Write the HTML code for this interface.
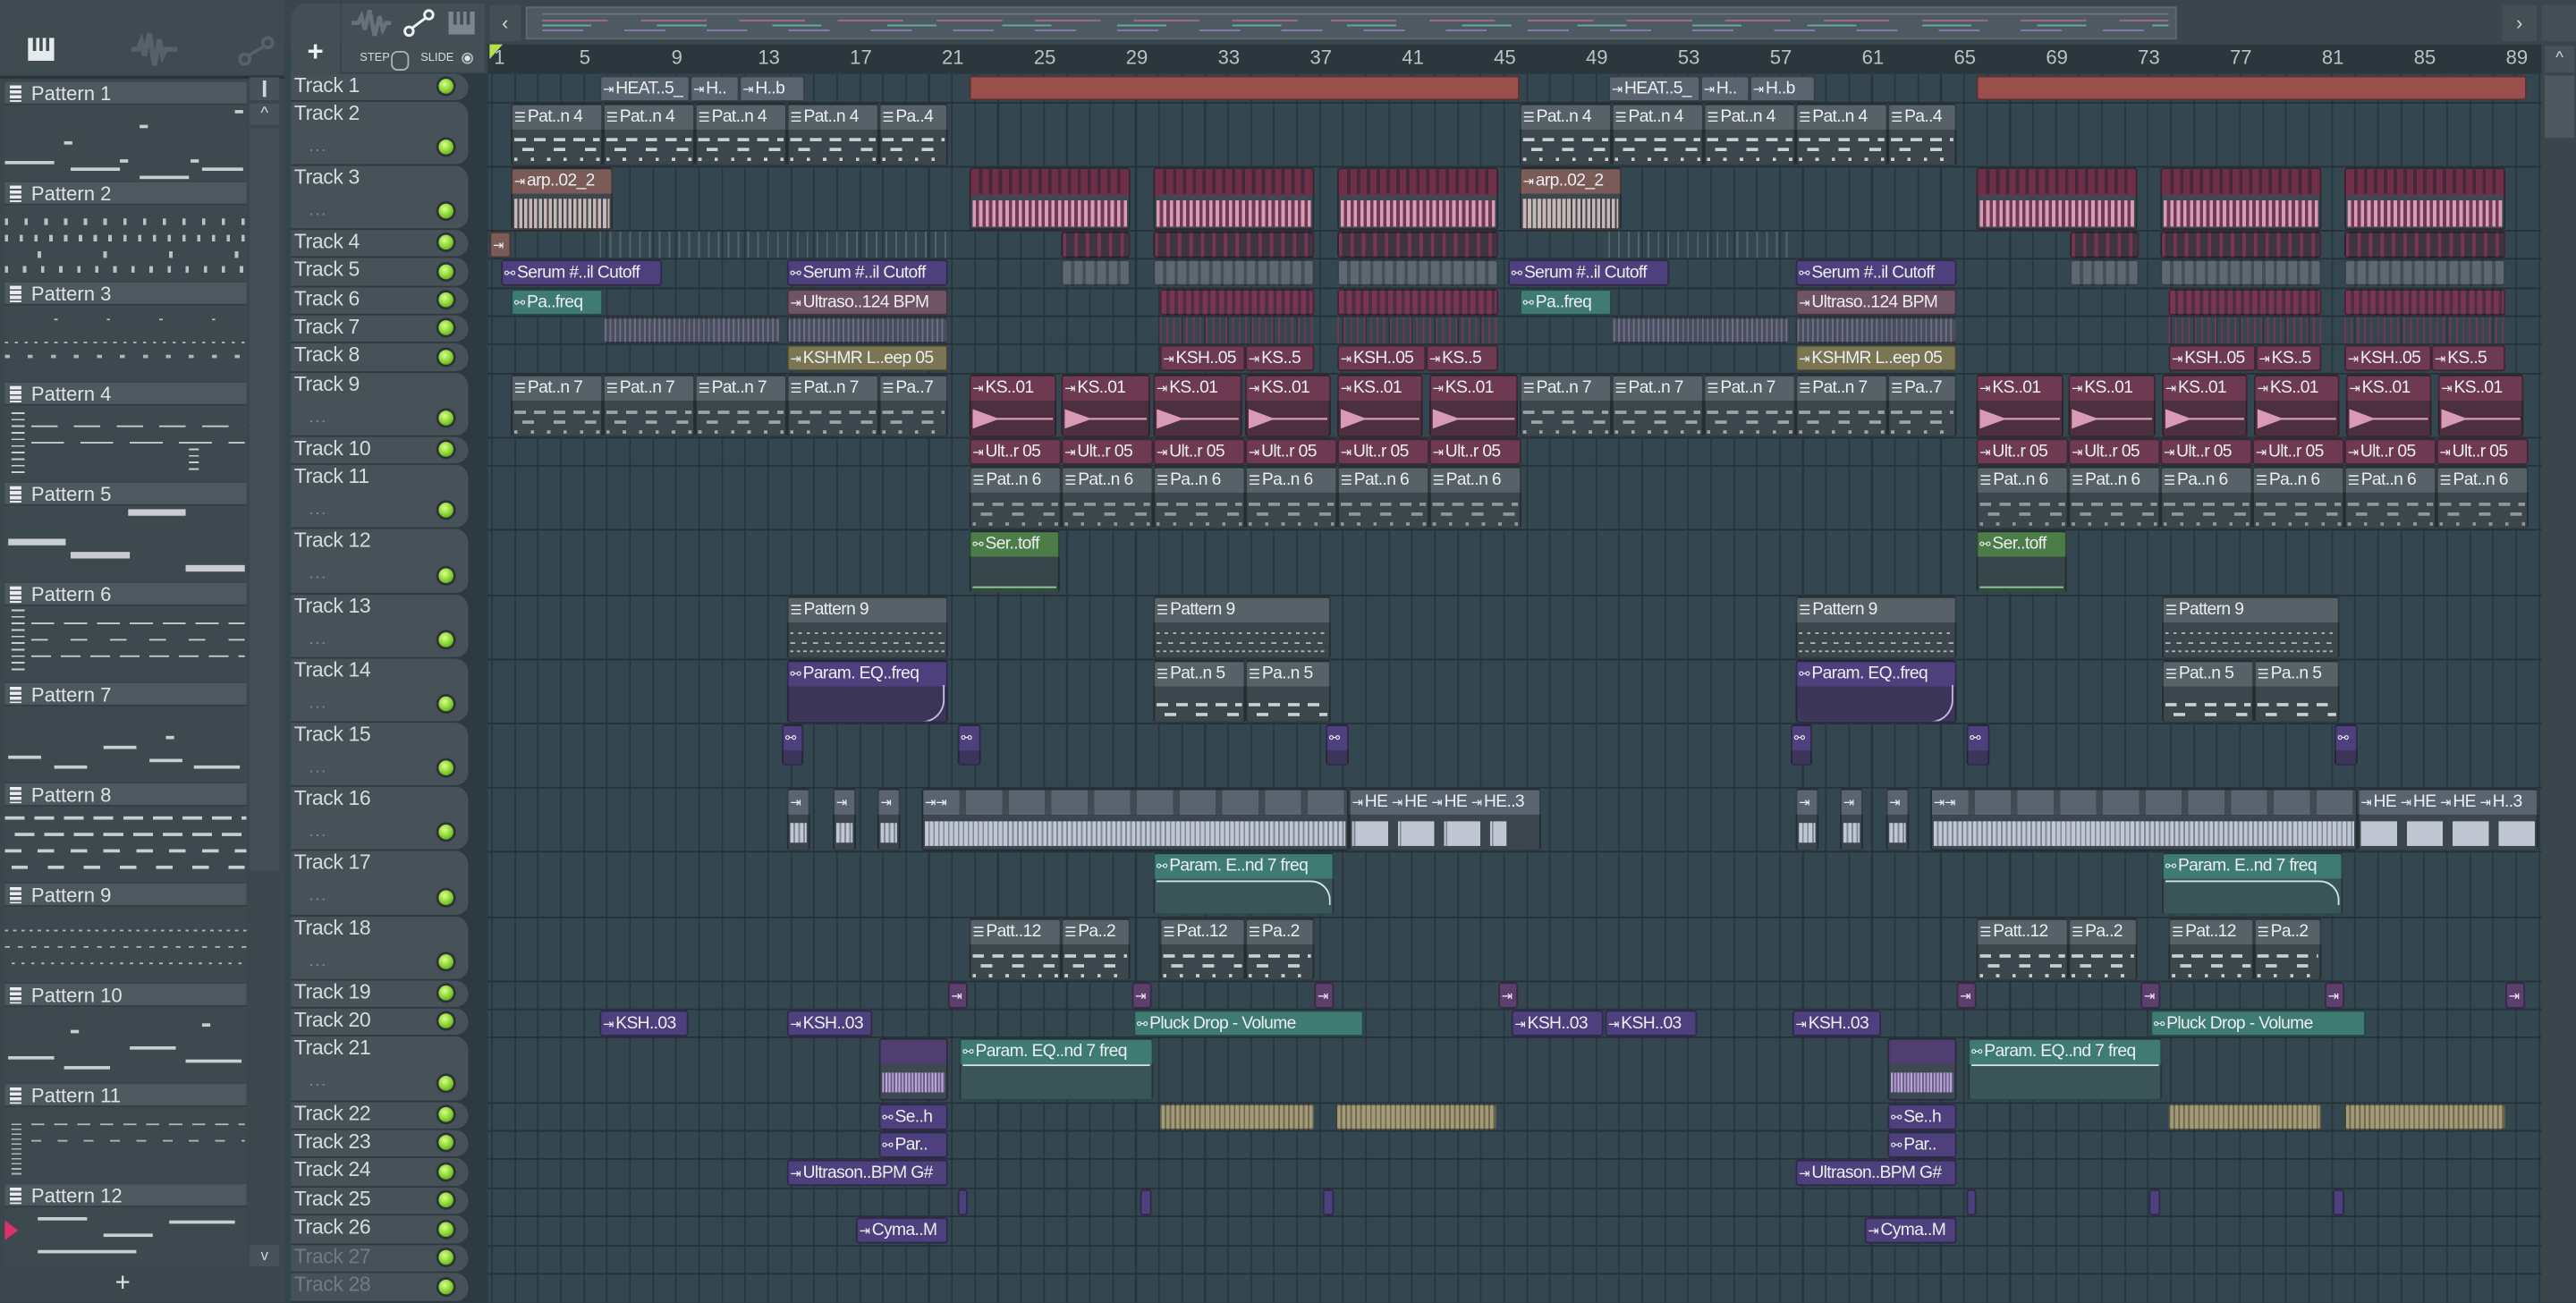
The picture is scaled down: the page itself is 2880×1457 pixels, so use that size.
<!DOCTYPE html>
<html><head><meta charset="utf-8">
<style>
body{margin:0;background:#2f3b42;width:2880px;height:1456px;overflow:hidden}
#w{position:absolute;left:0;top:0;width:1568px;height:793px;transform:scale(1.836735);transform-origin:0 0;font-family:"Liberation Sans Narrow","Liberation Sans","DejaVu Sans Condensed",sans-serif;overflow:hidden;background:#34454e}
.abs{position:absolute}
#left{position:absolute;left:0;top:0;width:173px;height:793px;background:#3b464d}
#ltop{position:absolute;left:0;top:0;width:173px;height:46px;background:#3f4a51;border-bottom:2px solid #2a353b}
.ph{position:absolute;left:3px;width:147px;height:14px;background:#4d585f;color:#dde3e6;font-size:12px;line-height:14px;padding-left:16px;box-sizing:border-box;border-bottom:1px solid #333e44}
.ph:before{content:"";position:absolute;left:3px;top:2px;width:7px;height:10px;background:repeating-linear-gradient(#e8ecee 0 2px,#4d585f 2px 3px)}
.pv{position:absolute;left:3px;width:147px;height:46px;background:#3e494f}
.n{position:absolute;height:2px;background:#c7cdd1}
#ptop{position:absolute;left:173px;top:0;width:1395px;height:27px;background:#3a454c}
#ruler{position:absolute;left:297px;top:27px;width:1250px;height:18px;background:#2b363d;color:#b9c3c8;font-size:12px}
#ruler span{position:absolute;top:1px;transform:translateX(-50%)}
#hdrs{position:absolute;left:177px;top:45px;width:120px;height:748px;background:#2e3a41}
.th{position:absolute;left:0;width:108px;box-sizing:border-box;background:#475158;border-radius:0 8px 8px 0;border-bottom:1px solid #2e3a41;color:#d5dcdf;font-size:12.5px;letter-spacing:-0.2px;line-height:15px;padding:0 0 0 2px}
.led{position:absolute;left:90px;width:9px;height:9px;border-radius:50%;background:radial-gradient(circle at 40% 35%,#d8ff8a,#86cf2c 55%,#4f8a17);box-shadow:0 0 0 1.5px #2a3338}
.dots{position:absolute;left:11px;color:#7f8b92;font-size:10px;letter-spacing:1px}
#grid{position:absolute;left:297px;top:45px;width:1250px;height:748px;background-color:#34464f;background-image:repeating-linear-gradient(90deg,#27363e 0 1px,transparent 1px 14px);background-position:2px 0}
.rl{position:absolute;left:297px;width:1250px;height:1px;background:#25323a}
.c{position:absolute;box-sizing:border-box;border:1px solid rgba(10,15,20,.45);border-radius:2px;overflow:hidden;font-size:10.5px;letter-spacing:-0.35px;color:#eceef2;line-height:14px;white-space:nowrap;padding-left:1px}
.i{font-size:8px;margin-right:1px;font-family:"DejaVu Sans",sans-serif;letter-spacing:0}
.p{background:linear-gradient(#566168 0 15px,#3b464d 15px)}
.a{background:linear-gradient(#6e3a52 0 15px,#4d3040 15px)}
.m{background:linear-gradient(#4e407c 0 15px,#3b3658 15px)}
.t{background:linear-gradient(#3f7a73 0 15px,#3b5458 15px)}
.g{background:linear-gradient(#4c7c47 0 15px,#37464a 15px)}
.o{background:#7a7553}
.b{background:linear-gradient(#7a5b58 0 15px,#3d464c 15px)}
.u{background:#6f5466}
.s{background:linear-gradient(#5a6470 0 15px,#3b464e 15px)}
.red{background:#9a4f4d}
.wv{position:absolute;left:1px;right:1px}
.pn{background:repeating-linear-gradient(90deg,#c9cfd3 0 7px,transparent 7px 12px) 0 3px/100% 2px no-repeat,repeating-linear-gradient(90deg,transparent 0 5px,#c9cfd3 5px 12px,transparent 12px 19px) 0 9px/100% 2px no-repeat,repeating-linear-gradient(90deg,#c9cfd3 0 2px,transparent 2px 10px) 0 15px/100% 2px no-repeat}
.pk{background:repeating-linear-gradient(90deg,#d89ab5 0 2px,#6e3a52 2px 4px)}
.sl{background:repeating-linear-gradient(90deg,#6e2f48 0 4px,#46283a 4px 6px)}
.gs{background:repeating-linear-gradient(90deg,#5e6872 0 5px,#454f59 5px 7px)}
.wg{background:repeating-linear-gradient(90deg,#c1c6d3 0 2px,#7f8898 2px 3px)}
.ol{background:repeating-linear-gradient(90deg,#a39a78 0 2px,#6e6850 2px 3px)}
</style></head><body><div id="w">

<!-- LEFT PANEL -->
<div id="left">
<div id="ltop">
 <svg class="abs" style="left:17px;top:23px" width="16" height="14" viewBox="0 0 16 14"><rect x="0" y="0" width="16" height="14" fill="#e6eaec"/><rect x="3" y="0" width="2" height="8" fill="#3f4a51"/><rect x="7" y="0" width="2" height="8" fill="#3f4a51"/><rect x="11" y="0" width="2" height="8" fill="#3f4a51"/></svg>
 <svg class="abs" style="left:80px;top:20px" width="28" height="20" viewBox="0 0 28 20"><path d="M0 10h4l2-5 2 9 3-14 3 20 3-16 2 10 2-4h7" stroke="#56626a" stroke-width="3" fill="none"/></svg>
 <svg class="abs" style="left:145px;top:22px" width="22" height="18" viewBox="0 0 22 18"><circle cx="4" cy="14" r="3" stroke="#56626a" stroke-width="2" fill="none"/><circle cx="18" cy="4" r="3" stroke="#56626a" stroke-width="2" fill="none"/><path d="M6 12L16 6" stroke="#56626a" stroke-width="2"/></svg>
</div>
<div class="abs" style="left:152px;top:47px;width:18px;height:14px;background:#47525a"><div class="abs" style="left:8px;top:2px;width:2px;height:10px;background:#cfd5d8"></div></div>
<div class="abs" style="left:152px;top:63px;width:18px;height:13px;background:#47525a;color:#cfd5d8;font-size:10px;text-align:center;line-height:13px">^</div>
<div class="abs" style="left:152px;top:78px;width:18px;height:452px;background:#434e55"></div>
<div class="abs" style="left:152px;top:758px;width:18px;height:13px;background:#47525a;color:#cfd5d8;font-size:9px;text-align:center;line-height:13px">v</div>
<div class="abs" style="left:70px;top:773px;color:#dfe4e6;font-size:16px">+</div>

<div class="ph" style="top:50px">Pattern 1</div><div class="pv" style="top:64px"><div class="n" style="left:0;top:34px;width:30px"></div><div class="n" style="left:40px;top:38px;width:30px"></div><div class="n" style="left:82px;top:43px;width:30px"></div><div class="n" style="left:120px;top:38px;width:25px"></div><div class="n" style="left:36px;top:22px;width:5px"></div><div class="n" style="left:82px;top:12px;width:5px"></div><div class="n" style="left:140px;top:3px;width:5px"></div><div class="n" style="left:70px;top:33px;width:5px"></div><div class="n" style="left:113px;top:33px;width:5px"></div></div>
<div class="ph" style="top:111px">Pattern 2</div><div class="pv" style="top:125px;background:repeating-linear-gradient(90deg,#b9c0c4 0 2px,transparent 2px 12px) 0 8px/100% 4px no-repeat,repeating-linear-gradient(90deg,#b9c0c4 0 2px,transparent 2px 9px) 0 18px/100% 4px no-repeat,repeating-linear-gradient(90deg,transparent 0 20px,#b9c0c4 20px 22px,transparent 22px 40px) 0 28px/100% 4px no-repeat,repeating-linear-gradient(90deg,#b9c0c4 0 2px,transparent 2px 11px) 0 37px/100% 4px no-repeat,#3e494f"></div>
<div class="ph" style="top:172px">Pattern 3</div><div class="pv" style="top:186px;background:repeating-linear-gradient(90deg,#aeb5ba 0 2px,transparent 2px 6px) 0 22px/100% 1px no-repeat,repeating-linear-gradient(90deg,#aeb5ba 0 3px,transparent 3px 14px) 0 30px/100% 2px no-repeat,repeating-linear-gradient(90deg,transparent 0 30px,#aeb5ba 30px 32px) 0 8px/100% 1px no-repeat,#3e494f"></div>
<div class="ph" style="top:233px">Pattern 4</div><div class="pv" style="top:247px;background:repeating-linear-gradient(#c7cdd1 0 1px,transparent 1px 4px) 4px 4px/8px 38px no-repeat,repeating-linear-gradient(90deg,#c7cdd1 0 16px,transparent 16px 26px) 16px 12px/130px 1px no-repeat,repeating-linear-gradient(90deg,#c7cdd1 0 20px,transparent 20px 30px) 16px 22px/130px 1px no-repeat,repeating-linear-gradient(#c7cdd1 0 1px,transparent 1px 4px) 112px 26px/6px 16px no-repeat,#3e494f"></div>
<div class="ph" style="top:294px">Pattern 5</div><div class="pv" style="top:308px"><div class="n" style="left:75px;top:2px;width:35px;height:4px"></div><div class="n" style="left:2px;top:20px;width:35px;height:4px"></div><div class="n" style="left:40px;top:28px;width:36px;height:4px"></div><div class="n" style="left:110px;top:36px;width:36px;height:4px"></div></div>
<div class="ph" style="top:355px">Pattern 6</div><div class="pv" style="top:369px;background:repeating-linear-gradient(#c7cdd1 0 1px,transparent 1px 4px) 4px 2px/8px 40px no-repeat,repeating-linear-gradient(90deg,#c7cdd1 0 14px,transparent 14px 20px) 16px 10px/130px 1px no-repeat,repeating-linear-gradient(90deg,#c7cdd1 0 10px,transparent 10px 24px) 16px 20px/130px 1px no-repeat,repeating-linear-gradient(90deg,#c7cdd1 0 12px,transparent 12px 18px) 16px 30px/130px 1px no-repeat,#3e494f"></div>
<div class="ph" style="top:416px">Pattern 7</div><div class="pv" style="top:430px"><div class="n" style="left:2px;top:30px;width:20px"></div><div class="n" style="left:30px;top:36px;width:20px"></div><div class="n" style="left:60px;top:24px;width:20px"></div><div class="n" style="left:88px;top:32px;width:20px"></div><div class="n" style="left:115px;top:36px;width:28px"></div><div class="n" style="left:98px;top:18px;width:5px"></div></div>
<div class="ph" style="top:477px">Pattern 8</div><div class="pv" style="top:491px;background:repeating-linear-gradient(90deg,#c7cdd1 0 12px,transparent 12px 18px) 0 6px/100% 2px no-repeat,repeating-linear-gradient(90deg,transparent 0 6px,#c7cdd1 6px 18px) 0 16px/100% 2px no-repeat,repeating-linear-gradient(90deg,#c7cdd1 0 10px,transparent 10px 20px) 0 26px/100% 2px no-repeat,repeating-linear-gradient(90deg,transparent 0 4px,#c7cdd1 4px 14px,transparent 14px 22px) 0 36px/100% 2px no-repeat,#3e494f"></div>
<div class="ph" style="top:538px">Pattern 9</div><div class="pv" style="top:552px;background:repeating-linear-gradient(90deg,#aeb5ba 0 2px,transparent 2px 5px) 0 14px/100% 1px no-repeat,repeating-linear-gradient(90deg,#aeb5ba 0 3px,transparent 3px 8px) 0 24px/100% 1px no-repeat,repeating-linear-gradient(90deg,transparent 0 4px,#aeb5ba 4px 6px) 0 34px/100% 1px no-repeat,#3e494f"></div>
<div class="ph" style="top:599px">Pattern 10</div><div class="pv" style="top:613px"><div class="n" style="left:2px;top:30px;width:28px"></div><div class="n" style="left:36px;top:36px;width:28px"></div><div class="n" style="left:76px;top:24px;width:28px"></div><div class="n" style="left:110px;top:32px;width:34px"></div><div class="n" style="left:40px;top:14px;width:5px"></div><div class="n" style="left:120px;top:10px;width:5px"></div></div>
<div class="ph" style="top:660px">Pattern 11</div><div class="pv" style="top:674px;background:repeating-linear-gradient(#aeb5ba 0 1px,transparent 1px 3px) 4px 10px/6px 32px no-repeat,repeating-linear-gradient(90deg,#aeb5ba 0 8px,transparent 8px 14px) 16px 10px/130px 1px no-repeat,repeating-linear-gradient(90deg,#aeb5ba 0 6px,transparent 6px 16px) 16px 20px/130px 1px no-repeat,#3e494f"></div>
<div class="ph" style="top:721px">Pattern 12</div><div class="pv" style="top:735px;height:36px"><div class="n" style="left:20px;top:6px;width:30px"></div><div class="n" style="left:60px;top:16px;width:30px"></div><div class="n" style="left:100px;top:8px;width:40px"></div><div class="n" style="left:20px;top:26px;width:60px"></div><div class="abs" style="left:0;top:8px;width:0;height:0;border-left:8px solid #e0306a;border-top:6px solid transparent;border-bottom:6px solid transparent"></div></div>
</div>

<!-- PLAYLIST TOP -->
<div id="ptop"></div>
<div class="abs" style="left:177px;top:2px;width:30px;height:43px;background:#434e55;border-radius:10px 0 0 0"></div>
<div class="abs" style="left:187px;top:22px;color:#eef1f2;font-size:17px;font-weight:bold">+</div>
<div class="abs" style="left:208px;top:2px;width:87px;height:42px;background:#434e55"></div>
<svg class="abs" style="left:214px;top:6px" width="24" height="16" viewBox="0 0 24 16"><path d="M0 8h4l2-4 2 8 3-12 3 16 3-12 2 8 2-4h5" stroke="#66727a" stroke-width="2.5" fill="none"/></svg>
<svg class="abs" style="left:245px;top:5px" width="20" height="18" viewBox="0 0 20 18"><circle cx="4" cy="14" r="2.6" stroke="#eef1f2" stroke-width="1.6" fill="none"/><circle cx="16" cy="4" r="2.6" stroke="#eef1f2" stroke-width="1.6" fill="none"/><path d="M6 12L14 6" stroke="#eef1f2" stroke-width="1.6"/></svg>
<svg class="abs" style="left:273px;top:7px" width="16" height="14" viewBox="0 0 16 14"><rect width="16" height="14" fill="#7b868d"/><rect x="3" width="2" height="8" fill="#434e55"/><rect x="7" width="2" height="8" fill="#434e55"/><rect x="11" width="2" height="8" fill="#434e55"/></svg>
<div class="abs" style="left:219px;top:32px;color:#d6dcdf;font-size:7px">STEP</div>
<div class="abs" style="left:238px;top:31px;width:9px;height:10px;border:1px solid #aab3b8;border-radius:4px"></div>
<div class="abs" style="left:256px;top:32px;color:#d6dcdf;font-size:7px">SLIDE</div>
<div class="abs" style="left:281px;top:32px;width:7px;height:7px;border:1px solid #aab3b8;border-radius:50%;box-sizing:border-box;background:radial-gradient(#dfe4e6 0 1.5px,transparent 2px)"></div>
<div class="abs" style="left:298px;top:3px;width:19px;height:22px;background:#434e55;color:#cfd5d8;font-size:12px;text-align:center;line-height:22px">&lsaquo;</div>
<div class="abs" style="left:320px;top:4px;width:1005px;height:20px;background:#4d5a61;border:1px solid #5d6a71;box-sizing:border-box"></div>
<div class="abs" style="left:330px;top:8px;width:990px;height:1px;background:#7a6f86"></div>
<div class="abs" style="left:330px;top:12px;width:990px;height:1px;background:repeating-linear-gradient(90deg,#a46b85 0 40px,transparent 40px 60px)"></div>
<div class="abs" style="left:330px;top:15px;width:990px;height:1px;background:repeating-linear-gradient(90deg,#6aa7a0 0 30px,transparent 30px 70px)"></div>
<div class="abs" style="left:330px;top:18px;width:990px;height:1px;background:repeating-linear-gradient(90deg,#8b7ab2 0 25px,transparent 25px 50px)"></div>
<div class="abs" style="left:1523px;top:3px;width:21px;height:22px;background:#434e55;color:#cfd5d8;font-size:12px;text-align:center;line-height:22px">&rsaquo;</div>
<div class="abs" style="left:1547px;top:3px;width:21px;height:22px;background:#434e55"></div>

<div id="ruler">
<span style="left:7px">1</span><span style="left:59px">5</span><span style="left:115px">9</span><span style="left:171px">13</span><span style="left:227px">17</span><span style="left:283px">21</span><span style="left:339px">25</span><span style="left:395px">29</span><span style="left:451px">33</span><span style="left:507px">37</span><span style="left:563px">41</span><span style="left:619px">45</span><span style="left:675px">49</span><span style="left:731px">53</span><span style="left:787px">57</span><span style="left:843px">61</span><span style="left:899px">65</span><span style="left:955px">69</span><span style="left:1011px">73</span><span style="left:1067px">77</span><span style="left:1123px">81</span><span style="left:1179px">85</span><span style="left:1235px">89</span>
</div>
<div class="abs" style="left:298px;top:27px;width:0;height:0;border-left:8px solid #b8e04a;border-bottom:9px solid transparent"></div>
<div class="abs" style="left:1547px;top:27px;width:21px;height:766px;background:#3a454c"></div>
<div class="abs" style="left:1549px;top:28px;width:18px;height:16px;background:#47525a;color:#cfd5d8;font-size:10px;text-align:center;line-height:16px">^</div>
<div class="abs" style="left:1549px;top:46px;width:18px;height:38px;background:#4c575e"></div>

<!-- TRACK HEADERS -->
<div id="hdrs">
<div class="th" style="top:0;height:17px">Track 1<div class="led" style="top:3px"></div></div>
<div class="th" style="top:17px;height:39px">Track 2<div class="dots" style="top:20px">...</div><div class="led" style="top:23px"></div></div>
<div class="th" style="top:56px;height:39px">Track 3<div class="dots" style="top:20px">...</div><div class="led" style="top:23px"></div></div>
<div class="th" style="top:95px;height:17px">Track 4<div class="led" style="top:3px"></div></div>
<div class="th" style="top:112px;height:18px">Track 5<div class="led" style="top:4px"></div></div>
<div class="th" style="top:130px;height:17px">Track 6<div class="led" style="top:3px"></div></div>
<div class="th" style="top:147px;height:17px">Track 7<div class="led" style="top:3px"></div></div>
<div class="th" style="top:164px;height:18px">Track 8<div class="led" style="top:4px"></div></div>
<div class="th" style="top:182px;height:39px">Track 9<div class="dots" style="top:20px">...</div><div class="led" style="top:23px"></div></div>
<div class="th" style="top:221px;height:17px">Track 10<div class="led" style="top:3px"></div></div>
<div class="th" style="top:238px;height:39px">Track 11<div class="dots" style="top:20px">...</div><div class="led" style="top:23px"></div></div>
<div class="th" style="top:277px;height:40px">Track 12<div class="dots" style="top:20px">...</div><div class="led" style="top:24px"></div></div>
<div class="th" style="top:317px;height:39px">Track 13<div class="dots" style="top:20px">...</div><div class="led" style="top:23px"></div></div>
<div class="th" style="top:356px;height:39px">Track 14<div class="dots" style="top:20px">...</div><div class="led" style="top:23px"></div></div>
<div class="th" style="top:395px;height:39px">Track 15<div class="dots" style="top:20px">...</div><div class="led" style="top:23px"></div></div>
<div class="th" style="top:434px;height:39px">Track 16<div class="dots" style="top:20px">...</div><div class="led" style="top:23px"></div></div>
<div class="th" style="top:473px;height:40px">Track 17<div class="dots" style="top:20px">...</div><div class="led" style="top:24px"></div></div>
<div class="th" style="top:513px;height:39px">Track 18<div class="dots" style="top:20px">...</div><div class="led" style="top:23px"></div></div>
<div class="th" style="top:552px;height:17px">Track 19<div class="led" style="top:3px"></div></div>
<div class="th" style="top:569px;height:17px">Track 20<div class="led" style="top:3px"></div></div>
<div class="th" style="top:586px;height:40px">Track 21<div class="dots" style="top:20px">...</div><div class="led" style="top:24px"></div></div>
<div class="th" style="top:626px;height:17px">Track 22<div class="led" style="top:3px"></div></div>
<div class="th" style="top:643px;height:17px">Track 23<div class="led" style="top:3px"></div></div>
<div class="th" style="top:660px;height:18px">Track 24<div class="led" style="top:4px"></div></div>
<div class="th" style="top:678px;height:17px">Track 25<div class="led" style="top:3px"></div></div>
<div class="th" style="top:695px;height:18px">Track 26<div class="led" style="top:4px"></div></div>
<div class="th" style="top:713px;height:17px;color:#6f7b83">Track 27<div class="led" style="top:3px"></div></div>
<div class="th" style="top:730px;height:18px;color:#6f7b83">Track 28<div class="led" style="top:4px"></div></div>
</div>

<!-- GRID -->
<div id="grid"></div>
<div class="rl" style="top:62px"></div><div class="rl" style="top:101px"></div><div class="rl" style="top:140px"></div><div class="rl" style="top:157px"></div><div class="rl" style="top:175px"></div><div class="rl" style="top:192px"></div><div class="rl" style="top:209px"></div><div class="rl" style="top:227px"></div><div class="rl" style="top:266px"></div><div class="rl" style="top:283px"></div><div class="rl" style="top:322px"></div><div class="rl" style="top:362px"></div><div class="rl" style="top:401px"></div><div class="rl" style="top:440px"></div><div class="rl" style="top:479px"></div><div class="rl" style="top:518px"></div><div class="rl" style="top:558px"></div><div class="rl" style="top:597px"></div><div class="rl" style="top:614px"></div><div class="rl" style="top:631px"></div><div class="rl" style="top:671px"></div><div class="rl" style="top:688px"></div><div class="rl" style="top:705px"></div><div class="rl" style="top:723px"></div><div class="rl" style="top:740px"></div><div class="rl" style="top:758px"></div><div class="rl" style="top:775px"></div>

<!-- T1 -->
<div class="c s" style="left:365px;top:46px;width:55px;height:16px"><span class="i">⇥</span>HEAT..5_</div>
<div class="c s" style="left:420px;top:46px;width:30px;height:16px"><span class="i">⇥</span>H..</div>
<div class="c s" style="left:450px;top:46px;width:40px;height:16px"><span class="i">⇥</span>H..b</div>
<div class="c red" style="left:590px;top:46px;width:335px;height:15px"></div>
<div class="c s" style="left:979px;top:46px;width:56px;height:16px"><span class="i">⇥</span>HEAT..5_</div>
<div class="c s" style="left:1035px;top:46px;width:30px;height:16px"><span class="i">⇥</span>H..</div>
<div class="c s" style="left:1065px;top:46px;width:40px;height:16px"><span class="i">⇥</span>H..b</div>
<div class="c red" style="left:1203px;top:46px;width:335px;height:15px"></div>

<!-- T2 -->
<div class="c p" style="left:311px;top:63px;width:56px;height:38px"><span class="i">☰</span>Pat..n 4<div class="wv pn" style="top:17px;height:20px"></div></div>
<div class="c p" style="left:367px;top:63px;width:56px;height:38px"><span class="i">☰</span>Pat..n 4<div class="wv pn" style="top:17px;height:20px"></div></div>
<div class="c p" style="left:423px;top:63px;width:56px;height:38px"><span class="i">☰</span>Pat..n 4<div class="wv pn" style="top:17px;height:20px"></div></div>
<div class="c p" style="left:479px;top:63px;width:56px;height:38px"><span class="i">☰</span>Pat..n 4<div class="wv pn" style="top:17px;height:20px"></div></div>
<div class="c p" style="left:535px;top:63px;width:42px;height:38px"><span class="i">☰</span>Pa..4<div class="wv pn" style="top:17px;height:20px"></div></div>
<div class="c p" style="left:925px;top:63px;width:56px;height:38px"><span class="i">☰</span>Pat..n 4<div class="wv pn" style="top:17px;height:20px"></div></div>
<div class="c p" style="left:981px;top:63px;width:56px;height:38px"><span class="i">☰</span>Pat..n 4<div class="wv pn" style="top:17px;height:20px"></div></div>
<div class="c p" style="left:1037px;top:63px;width:56px;height:38px"><span class="i">☰</span>Pat..n 4<div class="wv pn" style="top:17px;height:20px"></div></div>
<div class="c p" style="left:1093px;top:63px;width:56px;height:38px"><span class="i">☰</span>Pat..n 4<div class="wv pn" style="top:17px;height:20px"></div></div>
<div class="c p" style="left:1149px;top:63px;width:42px;height:38px"><span class="i">☰</span>Pa..4<div class="wv pn" style="top:17px;height:20px"></div></div>

<!-- T3 -->
<div class="c b" style="left:311px;top:102px;width:62px;height:38px"><span class="i">⇥</span>arp..02_2<div class="wv" style="top:18px;height:18px;background:repeating-linear-gradient(90deg,#d8c3c0 0 2px,transparent 2px 3px);opacity:.9"></div></div>
<div class="c b" style="left:925px;top:102px;width:62px;height:38px"><span class="i">⇥</span>arp..02_2<div class="wv" style="top:18px;height:18px;background:repeating-linear-gradient(90deg,#d8c3c0 0 2px,transparent 2px 3px);opacity:.9"></div></div>
<div class="c" style="left:590px;top:102px;width:98px;height:38px;background:linear-gradient(#6e3049 0 16px,#3d4850 16px)"><div class="wv sl" style="top:0;height:15px"></div><div class="wv pk" style="top:19px;height:16px"></div></div>
<div class="c" style="left:702px;top:102px;width:98px;height:38px;background:linear-gradient(#6e3049 0 16px,#3d4850 16px)"><div class="wv sl" style="top:0;height:15px"></div><div class="wv pk" style="top:19px;height:16px"></div></div>
<div class="c" style="left:814px;top:102px;width:98px;height:38px;background:linear-gradient(#6e3049 0 16px,#3d4850 16px)"><div class="wv sl" style="top:0;height:15px"></div><div class="wv pk" style="top:19px;height:16px"></div></div>
<div class="c" style="left:1203px;top:102px;width:98px;height:38px;background:linear-gradient(#6e3049 0 16px,#3d4850 16px)"><div class="wv sl" style="top:0;height:15px"></div><div class="wv pk" style="top:19px;height:16px"></div></div>
<div class="c" style="left:1315px;top:102px;width:98px;height:38px;background:linear-gradient(#6e3049 0 16px,#3d4850 16px)"><div class="wv sl" style="top:0;height:15px"></div><div class="wv pk" style="top:19px;height:16px"></div></div>
<div class="c" style="left:1427px;top:102px;width:98px;height:38px;background:linear-gradient(#6e3049 0 16px,#3d4850 16px)"><div class="wv sl" style="top:0;height:15px"></div><div class="wv pk" style="top:19px;height:16px"></div></div>

<!-- T4 -->
<div class="c b" style="left:298px;top:141px;width:13px;height:16px;font-size:9px"><span class="i">⇥</span></div>
<div class="abs" style="left:365px;top:141px;width:212px;height:16px;background:repeating-linear-gradient(90deg,#55646c 0 1px,transparent 1px 6px)"></div>
<div class="abs" style="left:979px;top:141px;width:110px;height:16px;background:repeating-linear-gradient(90deg,#55646c 0 1px,transparent 1px 6px)"></div>
<div class="c" style="left:646px;top:141px;width:42px;height:16px;background:repeating-linear-gradient(90deg,#7a3555 0 2px,#3f3542 2px 7px)"></div>
<div class="c" style="left:702px;top:141px;width:98px;height:16px;background:repeating-linear-gradient(90deg,#7a3555 0 2px,#3f3542 2px 7px)"></div>
<div class="c" style="left:814px;top:141px;width:98px;height:16px;background:repeating-linear-gradient(90deg,#7a3555 0 2px,#3f3542 2px 7px)"></div>
<div class="c" style="left:1260px;top:141px;width:42px;height:16px;background:repeating-linear-gradient(90deg,#7a3555 0 2px,#3f3542 2px 7px)"></div>
<div class="c" style="left:1315px;top:141px;width:98px;height:16px;background:repeating-linear-gradient(90deg,#7a3555 0 2px,#3f3542 2px 7px)"></div>
<div class="c" style="left:1427px;top:141px;width:98px;height:16px;background:repeating-linear-gradient(90deg,#7a3555 0 2px,#3f3542 2px 7px)"></div>

<!-- T5 -->
<div class="c m" style="left:305px;top:158px;width:98px;height:16px"><span class="i">⚯</span>Serum #..il Cutoff</div>
<div class="c m" style="left:479px;top:158px;width:98px;height:16px"><span class="i">⚯</span>Serum #..il Cutoff</div>
<div class="c m" style="left:918px;top:158px;width:98px;height:16px"><span class="i">⚯</span>Serum #..il Cutoff</div>
<div class="c m" style="left:1093px;top:158px;width:98px;height:16px"><span class="i">⚯</span>Serum #..il Cutoff</div>
<div class="c gs" style="left:646px;top:158px;width:42px;height:16px"></div>
<div class="c gs" style="left:702px;top:158px;width:98px;height:16px"></div>
<div class="c gs" style="left:814px;top:158px;width:98px;height:16px"></div>
<div class="c gs" style="left:1260px;top:158px;width:42px;height:16px"></div>
<div class="c gs" style="left:1315px;top:158px;width:98px;height:16px"></div>
<div class="c gs" style="left:1427px;top:158px;width:98px;height:16px"></div>

<!-- T6 -->
<div class="c t" style="left:311px;top:176px;width:56px;height:16px"><span class="i">⚯</span>Pa..freq</div>
<div class="c u" style="left:479px;top:176px;width:98px;height:16px"><span class="i">⇥</span>Ultraso..124 BPM</div>
<div class="c t" style="left:925px;top:176px;width:56px;height:16px"><span class="i">⚯</span>Pa..freq</div>
<div class="c u" style="left:1093px;top:176px;width:98px;height:16px"><span class="i">⇥</span>Ultraso..124 BPM</div>
<div class="c" style="left:706px;top:176px;width:94px;height:16px;background:repeating-linear-gradient(90deg,#7a3555 0 3px,#4a3040 3px 5px)"></div>
<div class="c" style="left:814px;top:176px;width:98px;height:16px;background:repeating-linear-gradient(90deg,#7a3555 0 3px,#4a3040 3px 5px)"></div>
<div class="c" style="left:1320px;top:176px;width:93px;height:16px;background:repeating-linear-gradient(90deg,#7a3555 0 3px,#4a3040 3px 5px)"></div>
<div class="c" style="left:1427px;top:176px;width:98px;height:16px;background:repeating-linear-gradient(90deg,#7a3555 0 3px,#4a3040 3px 5px)"></div>

<!-- T7 -->
<div class="c" style="left:367px;top:193px;width:108px;height:16px;background:repeating-linear-gradient(90deg,#6d6f85 0 1px,#4a4d5e 1px 3px)"></div>
<div class="c" style="left:479px;top:193px;width:98px;height:16px;background:repeating-linear-gradient(90deg,#6d6f85 0 1px,#4a4d5e 1px 3px)"></div>
<div class="c" style="left:981px;top:193px;width:108px;height:16px;background:repeating-linear-gradient(90deg,#6d6f85 0 1px,#4a4d5e 1px 3px)"></div>
<div class="c" style="left:1093px;top:193px;width:98px;height:16px;background:repeating-linear-gradient(90deg,#6d6f85 0 1px,#4a4d5e 1px 3px)"></div>
<div class="abs" style="left:706px;top:193px;width:94px;height:16px;background:repeating-linear-gradient(90deg,#7a3555 0 1px,transparent 1px 4px)"></div>
<div class="abs" style="left:814px;top:193px;width:98px;height:16px;background:repeating-linear-gradient(90deg,#7a3555 0 1px,transparent 1px 4px)"></div>
<div class="abs" style="left:1320px;top:193px;width:93px;height:16px;background:repeating-linear-gradient(90deg,#7a3555 0 1px,transparent 1px 4px)"></div>
<div class="abs" style="left:1427px;top:193px;width:98px;height:16px;background:repeating-linear-gradient(90deg,#7a3555 0 1px,transparent 1px 4px)"></div>

<!-- T8 -->
<div class="c o" style="left:479px;top:210px;width:98px;height:16px"><span class="i">⇥</span>KSHMR L..eep 05</div>
<div class="c o" style="left:1093px;top:210px;width:98px;height:16px"><span class="i">⇥</span>KSHMR L..eep 05</div>
<div class="c a" style="left:706px;top:210px;width:52px;height:16px"><span class="i">⇥</span>KSH..05</div>
<div class="c a" style="left:758px;top:210px;width:42px;height:16px"><span class="i">⇥</span>KS..5</div>
<div class="c a" style="left:814px;top:210px;width:54px;height:16px"><span class="i">⇥</span>KSH..05</div>
<div class="c a" style="left:868px;top:210px;width:44px;height:16px"><span class="i">⇥</span>KS..5</div>
<div class="c a" style="left:1320px;top:210px;width:53px;height:16px"><span class="i">⇥</span>KSH..05</div>
<div class="c a" style="left:1373px;top:210px;width:40px;height:16px"><span class="i">⇥</span>KS..5</div>
<div class="c a" style="left:1427px;top:210px;width:53px;height:16px"><span class="i">⇥</span>KSH..05</div>
<div class="c a" style="left:1480px;top:210px;width:45px;height:16px"><span class="i">⇥</span>KS..5</div>

<!-- T9 -->
<div class="c p" style="left:311px;top:228px;width:56px;height:38px"><span class="i">☰</span>Pat..n 7<div class="wv pn" style="top:18px;height:18px;opacity:.7"></div></div>
<div class="c p" style="left:367px;top:228px;width:56px;height:38px"><span class="i">☰</span>Pat..n 7<div class="wv pn" style="top:18px;height:18px;opacity:.7"></div></div>
<div class="c p" style="left:423px;top:228px;width:56px;height:38px"><span class="i">☰</span>Pat..n 7<div class="wv pn" style="top:18px;height:18px;opacity:.7"></div></div>
<div class="c p" style="left:479px;top:228px;width:56px;height:38px"><span class="i">☰</span>Pat..n 7<div class="wv pn" style="top:18px;height:18px;opacity:.7"></div></div>
<div class="c p" style="left:535px;top:228px;width:42px;height:38px"><span class="i">☰</span>Pa..7<div class="wv pn" style="top:18px;height:18px;opacity:.7"></div></div>
<div class="c p" style="left:925px;top:228px;width:56px;height:38px"><span class="i">☰</span>Pat..n 7<div class="wv pn" style="top:18px;height:18px;opacity:.7"></div></div>
<div class="c p" style="left:981px;top:228px;width:56px;height:38px"><span class="i">☰</span>Pat..n 7<div class="wv pn" style="top:18px;height:18px;opacity:.7"></div></div>
<div class="c p" style="left:1037px;top:228px;width:56px;height:38px"><span class="i">☰</span>Pat..n 7<div class="wv pn" style="top:18px;height:18px;opacity:.7"></div></div>
<div class="c p" style="left:1093px;top:228px;width:56px;height:38px"><span class="i">☰</span>Pat..n 7<div class="wv pn" style="top:18px;height:18px;opacity:.7"></div></div>
<div class="c p" style="left:1149px;top:228px;width:42px;height:38px"><span class="i">☰</span>Pa..7<div class="wv pn" style="top:18px;height:18px;opacity:.7"></div></div>
<div class="c a" style="left:590px;top:228px;width:53px;height:38px"><span class="i">⇥</span>KS..01<div class="wv" style="top:20px;height:12px;background:#d89ab5;clip-path:polygon(0 0,30% 45%,100% 45%,100% 55%,30% 55%,0 100%)"></div></div>
<div class="c a" style="left:646px;top:228px;width:54px;height:38px"><span class="i">⇥</span>KS..01<div class="wv" style="top:20px;height:12px;background:#d89ab5;clip-path:polygon(0 0,30% 45%,100% 45%,100% 55%,30% 55%,0 100%)"></div></div>
<div class="c a" style="left:702px;top:228px;width:54px;height:38px"><span class="i">⇥</span>KS..01<div class="wv" style="top:20px;height:12px;background:#d89ab5;clip-path:polygon(0 0,30% 45%,100% 45%,100% 55%,30% 55%,0 100%)"></div></div>
<div class="c a" style="left:758px;top:228px;width:52px;height:38px"><span class="i">⇥</span>KS..01<div class="wv" style="top:20px;height:12px;background:#d89ab5;clip-path:polygon(0 0,30% 45%,100% 45%,100% 55%,30% 55%,0 100%)"></div></div>
<div class="c a" style="left:814px;top:228px;width:52px;height:38px"><span class="i">⇥</span>KS..01<div class="wv" style="top:20px;height:12px;background:#d89ab5;clip-path:polygon(0 0,30% 45%,100% 45%,100% 55%,30% 55%,0 100%)"></div></div>
<div class="c a" style="left:870px;top:228px;width:54px;height:38px"><span class="i">⇥</span>KS..01<div class="wv" style="top:20px;height:12px;background:#d89ab5;clip-path:polygon(0 0,30% 45%,100% 45%,100% 55%,30% 55%,0 100%)"></div></div>
<div class="c a" style="left:1203px;top:228px;width:53px;height:38px"><span class="i">⇥</span>KS..01<div class="wv" style="top:20px;height:12px;background:#d89ab5;clip-path:polygon(0 0,30% 45%,100% 45%,100% 55%,30% 55%,0 100%)"></div></div>
<div class="c a" style="left:1259px;top:228px;width:53px;height:38px"><span class="i">⇥</span>KS..01<div class="wv" style="top:20px;height:12px;background:#d89ab5;clip-path:polygon(0 0,30% 45%,100% 45%,100% 55%,30% 55%,0 100%)"></div></div>
<div class="c a" style="left:1316px;top:228px;width:52px;height:38px"><span class="i">⇥</span>KS..01<div class="wv" style="top:20px;height:12px;background:#d89ab5;clip-path:polygon(0 0,30% 45%,100% 45%,100% 55%,30% 55%,0 100%)"></div></div>
<div class="c a" style="left:1372px;top:228px;width:52px;height:38px"><span class="i">⇥</span>KS..01<div class="wv" style="top:20px;height:12px;background:#d89ab5;clip-path:polygon(0 0,30% 45%,100% 45%,100% 55%,30% 55%,0 100%)"></div></div>
<div class="c a" style="left:1428px;top:228px;width:52px;height:38px"><span class="i">⇥</span>KS..01<div class="wv" style="top:20px;height:12px;background:#d89ab5;clip-path:polygon(0 0,30% 45%,100% 45%,100% 55%,30% 55%,0 100%)"></div></div>
<div class="c a" style="left:1484px;top:228px;width:52px;height:38px"><span class="i">⇥</span>KS..01<div class="wv" style="top:20px;height:12px;background:#d89ab5;clip-path:polygon(0 0,30% 45%,100% 45%,100% 55%,30% 55%,0 100%)"></div></div>

<!-- T10 -->
<div class="c a" style="left:590px;top:267px;width:56px;height:16px"><span class="i">⇥</span>Ult..r 05</div>
<div class="c a" style="left:646px;top:267px;width:56px;height:16px"><span class="i">⇥</span>Ult..r 05</div>
<div class="c a" style="left:702px;top:267px;width:56px;height:16px"><span class="i">⇥</span>Ult..r 05</div>
<div class="c a" style="left:758px;top:267px;width:56px;height:16px"><span class="i">⇥</span>Ult..r 05</div>
<div class="c a" style="left:814px;top:267px;width:56px;height:16px"><span class="i">⇥</span>Ult..r 05</div>
<div class="c a" style="left:870px;top:267px;width:56px;height:16px"><span class="i">⇥</span>Ult..r 05</div>
<div class="c a" style="left:1203px;top:267px;width:56px;height:16px"><span class="i">⇥</span>Ult..r 05</div>
<div class="c a" style="left:1259px;top:267px;width:56px;height:16px"><span class="i">⇥</span>Ult..r 05</div>
<div class="c a" style="left:1315px;top:267px;width:56px;height:16px"><span class="i">⇥</span>Ult..r 05</div>
<div class="c a" style="left:1371px;top:267px;width:56px;height:16px"><span class="i">⇥</span>Ult..r 05</div>
<div class="c a" style="left:1427px;top:267px;width:56px;height:16px"><span class="i">⇥</span>Ult..r 05</div>
<div class="c a" style="left:1483px;top:267px;width:56px;height:16px"><span class="i">⇥</span>Ult..r 05</div>

<!-- T11 -->
<div class="c p" style="left:590px;top:284px;width:56px;height:38px"><span class="i">☰</span>Pat..n 6<div class="wv pn" style="top:18px;height:18px;opacity:.6"></div></div>
<div class="c p" style="left:646px;top:284px;width:56px;height:38px"><span class="i">☰</span>Pat..n 6<div class="wv pn" style="top:18px;height:18px;opacity:.6"></div></div>
<div class="c p" style="left:702px;top:284px;width:56px;height:38px"><span class="i">☰</span>Pa..n 6<div class="wv pn" style="top:18px;height:18px;opacity:.6"></div></div>
<div class="c p" style="left:758px;top:284px;width:56px;height:38px"><span class="i">☰</span>Pa..n 6<div class="wv pn" style="top:18px;height:18px;opacity:.6"></div></div>
<div class="c p" style="left:814px;top:284px;width:56px;height:38px"><span class="i">☰</span>Pat..n 6<div class="wv pn" style="top:18px;height:18px;opacity:.6"></div></div>
<div class="c p" style="left:870px;top:284px;width:56px;height:38px"><span class="i">☰</span>Pat..n 6<div class="wv pn" style="top:18px;height:18px;opacity:.6"></div></div>
<div class="c p" style="left:1203px;top:284px;width:56px;height:38px"><span class="i">☰</span>Pat..n 6<div class="wv pn" style="top:18px;height:18px;opacity:.6"></div></div>
<div class="c p" style="left:1259px;top:284px;width:56px;height:38px"><span class="i">☰</span>Pat..n 6<div class="wv pn" style="top:18px;height:18px;opacity:.6"></div></div>
<div class="c p" style="left:1315px;top:284px;width:56px;height:38px"><span class="i">☰</span>Pa..n 6<div class="wv pn" style="top:18px;height:18px;opacity:.6"></div></div>
<div class="c p" style="left:1371px;top:284px;width:56px;height:38px"><span class="i">☰</span>Pa..n 6<div class="wv pn" style="top:18px;height:18px;opacity:.6"></div></div>
<div class="c p" style="left:1427px;top:284px;width:56px;height:38px"><span class="i">☰</span>Pat..n 6<div class="wv pn" style="top:18px;height:18px;opacity:.6"></div></div>
<div class="c p" style="left:1483px;top:284px;width:56px;height:38px"><span class="i">☰</span>Pat..n 6<div class="wv pn" style="top:18px;height:18px;opacity:.6"></div></div>

<!-- T12 -->
<div class="c g" style="left:590px;top:323px;width:55px;height:38px"><span class="i">⚯</span>Ser..toff<div class="wv" style="top:33px;height:1px;background:#8fd08a"></div></div>
<div class="c g" style="left:1203px;top:323px;width:55px;height:38px"><span class="i">⚯</span>Ser..toff<div class="wv" style="top:33px;height:1px;background:#8fd08a"></div></div>

<!-- T13 -->
<div class="c p" style="left:479px;top:363px;width:98px;height:38px"><span class="i">☰</span>Pattern 9<div class="wv" style="top:18px;height:18px;background:repeating-linear-gradient(90deg,#aeb5ba 0 2px,transparent 2px 5px) 0 3px/100% 1px no-repeat,repeating-linear-gradient(90deg,#aeb5ba 0 3px,transparent 3px 7px) 0 9px/100% 1px no-repeat,repeating-linear-gradient(90deg,#aeb5ba 0 2px,transparent 2px 4px) 0 14px/100% 1px no-repeat"></div></div>
<div class="c p" style="left:702px;top:363px;width:108px;height:38px"><span class="i">☰</span>Pattern 9<div class="wv" style="top:18px;height:18px;background:repeating-linear-gradient(90deg,#aeb5ba 0 2px,transparent 2px 5px) 0 3px/100% 1px no-repeat,repeating-linear-gradient(90deg,#aeb5ba 0 3px,transparent 3px 7px) 0 9px/100% 1px no-repeat,repeating-linear-gradient(90deg,#aeb5ba 0 2px,transparent 2px 4px) 0 14px/100% 1px no-repeat"></div></div>
<div class="c p" style="left:1093px;top:363px;width:98px;height:38px"><span class="i">☰</span>Pattern 9<div class="wv" style="top:18px;height:18px;background:repeating-linear-gradient(90deg,#aeb5ba 0 2px,transparent 2px 5px) 0 3px/100% 1px no-repeat,repeating-linear-gradient(90deg,#aeb5ba 0 3px,transparent 3px 7px) 0 9px/100% 1px no-repeat,repeating-linear-gradient(90deg,#aeb5ba 0 2px,transparent 2px 4px) 0 14px/100% 1px no-repeat"></div></div>
<div class="c p" style="left:1316px;top:363px;width:108px;height:38px"><span class="i">☰</span>Pattern 9<div class="wv" style="top:18px;height:18px;background:repeating-linear-gradient(90deg,#aeb5ba 0 2px,transparent 2px 5px) 0 3px/100% 1px no-repeat,repeating-linear-gradient(90deg,#aeb5ba 0 3px,transparent 3px 7px) 0 9px/100% 1px no-repeat,repeating-linear-gradient(90deg,#aeb5ba 0 2px,transparent 2px 4px) 0 14px/100% 1px no-repeat"></div></div>

<!-- T14 -->
<div class="c m" style="left:479px;top:402px;width:98px;height:38px"><span class="i">⚯</span>Param. EQ..freq<div class="wv" style="top:14px;height:22px;border-bottom:1px solid #c9c2e6;border-right:1px solid #c9c2e6;border-radius:0 0 14px 0"></div></div>
<div class="c p" style="left:702px;top:402px;width:56px;height:38px"><span class="i">☰</span>Pat..n 5<div class="wv pn" style="top:22px;height:14px"></div></div>
<div class="c p" style="left:758px;top:402px;width:52px;height:38px"><span class="i">☰</span>Pa..n 5<div class="wv pn" style="top:22px;height:14px"></div></div>
<div class="c m" style="left:1093px;top:402px;width:98px;height:38px"><span class="i">⚯</span>Param. EQ..freq<div class="wv" style="top:14px;height:22px;border-bottom:1px solid #c9c2e6;border-right:1px solid #c9c2e6;border-radius:0 0 14px 0"></div></div>
<div class="c p" style="left:1316px;top:402px;width:56px;height:38px"><span class="i">☰</span>Pat..n 5<div class="wv pn" style="top:22px;height:14px"></div></div>
<div class="c p" style="left:1372px;top:402px;width:52px;height:38px"><span class="i">☰</span>Pa..n 5<div class="wv pn" style="top:22px;height:14px"></div></div>

<!-- T15 -->
<div class="c m" style="left:476px;top:441px;width:13px;height:25px;font-size:9px"><span class="i">⚯</span></div>
<div class="c m" style="left:583px;top:441px;width:14px;height:25px;font-size:9px"><span class="i">⚯</span></div>
<div class="c m" style="left:807px;top:441px;width:14px;height:25px;font-size:9px"><span class="i">⚯</span></div>
<div class="c m" style="left:1090px;top:441px;width:13px;height:25px;font-size:9px"><span class="i">⚯</span></div>
<div class="c m" style="left:1197px;top:441px;width:14px;height:25px;font-size:9px"><span class="i">⚯</span></div>
<div class="c m" style="left:1421px;top:441px;width:14px;height:25px;font-size:9px"><span class="i">⚯</span></div>

<!-- T16 -->
<div class="c s" style="left:479px;top:480px;width:14px;height:38px"><span class="i">⇥</span><div class="wv wg" style="top:20px;height:12px"></div></div>
<div class="c s" style="left:507px;top:480px;width:14px;height:38px"><span class="i">⇥</span><div class="wv wg" style="top:20px;height:12px"></div></div>
<div class="c s" style="left:534px;top:480px;width:14px;height:38px"><span class="i">⇥</span><div class="wv wg" style="top:20px;height:12px"></div></div>
<div class="c s" style="left:561px;top:480px;width:260px;height:38px;background:repeating-linear-gradient(90deg,#5a6470 0 22px,#3f4a52 22px 26px) 0 0/100% 15px no-repeat,#3b464e"><span class="i">⇥⇥</span><div class="wv wg" style="top:19px;height:15px"></div></div>
<div class="c s" style="left:821px;top:480px;width:117px;height:38px"><span class="i">⇥</span>HE <span class="i">⇥</span>HE <span class="i">⇥</span>HE <span class="i">⇥</span>HE..3<div class="wv" style="top:19px;height:15px;right:20px;background:repeating-linear-gradient(90deg,#c1c6d3 0 1px,#7f8898 1px 2px,#c1c6d3 2px 22px,transparent 22px 28px)"></div></div>
<div class="c s" style="left:1093px;top:480px;width:14px;height:38px"><span class="i">⇥</span><div class="wv wg" style="top:20px;height:12px"></div></div>
<div class="c s" style="left:1120px;top:480px;width:14px;height:38px"><span class="i">⇥</span><div class="wv wg" style="top:20px;height:12px"></div></div>
<div class="c s" style="left:1148px;top:480px;width:14px;height:38px"><span class="i">⇥</span><div class="wv wg" style="top:20px;height:12px"></div></div>
<div class="c s" style="left:1175px;top:480px;width:260px;height:38px;background:repeating-linear-gradient(90deg,#5a6470 0 22px,#3f4a52 22px 26px) 0 0/100% 15px no-repeat,#3b464e"><span class="i">⇥⇥</span><div class="wv wg" style="top:19px;height:15px"></div></div>
<div class="c s" style="left:1435px;top:480px;width:110px;height:38px"><span class="i">⇥</span>HE <span class="i">⇥</span>HE <span class="i">⇥</span>HE <span class="i">⇥</span>H..3<div class="wv" style="top:19px;height:15px;background:repeating-linear-gradient(90deg,#c1c6d3 0 22px,transparent 22px 28px)"></div></div>

<!-- T17 -->
<div class="c t" style="left:702px;top:519px;width:110px;height:38px"><span class="i">⚯</span>Param. E..nd 7 freq<div class="wv" style="top:16px;height:14px;border-top:1px solid #cfe7e4;border-right:1px solid #cfe7e4;border-radius:0 12px 0 0"></div></div>
<div class="c t" style="left:1316px;top:519px;width:110px;height:38px"><span class="i">⚯</span>Param. E..nd 7 freq<div class="wv" style="top:16px;height:14px;border-top:1px solid #cfe7e4;border-right:1px solid #cfe7e4;border-radius:0 12px 0 0"></div></div>

<!-- T18 -->
<div class="c p" style="left:590px;top:559px;width:56px;height:38px"><span class="i">☰</span>Patt..12<div class="wv pn" style="top:18px;height:18px"></div></div>
<div class="c p" style="left:646px;top:559px;width:42px;height:38px"><span class="i">☰</span>Pa..2<div class="wv pn" style="top:18px;height:18px"></div></div>
<div class="c p" style="left:706px;top:559px;width:52px;height:38px"><span class="i">☰</span>Pat..12<div class="wv pn" style="top:18px;height:18px"></div></div>
<div class="c p" style="left:758px;top:559px;width:42px;height:38px"><span class="i">☰</span>Pa..2<div class="wv pn" style="top:18px;height:18px"></div></div>
<div class="c p" style="left:1203px;top:559px;width:56px;height:38px"><span class="i">☰</span>Patt..12<div class="wv pn" style="top:18px;height:18px"></div></div>
<div class="c p" style="left:1259px;top:559px;width:42px;height:38px"><span class="i">☰</span>Pa..2<div class="wv pn" style="top:18px;height:18px"></div></div>
<div class="c p" style="left:1320px;top:559px;width:52px;height:38px"><span class="i">☰</span>Pat..12<div class="wv pn" style="top:18px;height:18px"></div></div>
<div class="c p" style="left:1372px;top:559px;width:41px;height:38px"><span class="i">☰</span>Pa..2<div class="wv pn" style="top:18px;height:18px"></div></div>

<!-- T19 -->
<div class="c m" style="left:577px;top:598px;width:12px;height:16px;background:#5d3f6e"><span class="i">⇥</span></div>
<div class="c m" style="left:689px;top:598px;width:12px;height:16px;background:#5d3f6e"><span class="i">⇥</span></div>
<div class="c m" style="left:800px;top:598px;width:12px;height:16px;background:#5d3f6e"><span class="i">⇥</span></div>
<div class="c m" style="left:912px;top:598px;width:12px;height:16px;background:#5d3f6e"><span class="i">⇥</span></div>
<div class="c m" style="left:1191px;top:598px;width:12px;height:16px;background:#5d3f6e"><span class="i">⇥</span></div>
<div class="c m" style="left:1303px;top:598px;width:12px;height:16px;background:#5d3f6e"><span class="i">⇥</span></div>
<div class="c m" style="left:1415px;top:598px;width:12px;height:16px;background:#5d3f6e"><span class="i">⇥</span></div>
<div class="c m" style="left:1525px;top:598px;width:12px;height:16px;background:#5d3f6e"><span class="i">⇥</span></div>

<!-- T20 -->
<div class="c m" style="left:365px;top:615px;width:54px;height:16px"><span class="i">⇥</span>KSH..03</div>
<div class="c m" style="left:479px;top:615px;width:52px;height:16px"><span class="i">⇥</span>KSH..03</div>
<div class="c t" style="left:690px;top:615px;width:140px;height:16px"><span class="i">⚯</span>Pluck Drop - Volume</div>
<div class="c m" style="left:920px;top:615px;width:56px;height:16px"><span class="i">⇥</span>KSH..03</div>
<div class="c m" style="left:977px;top:615px;width:56px;height:16px"><span class="i">⇥</span>KSH..03</div>
<div class="c m" style="left:1091px;top:615px;width:54px;height:16px"><span class="i">⇥</span>KSH..03</div>
<div class="c t" style="left:1309px;top:615px;width:131px;height:16px"><span class="i">⚯</span>Pluck Drop - Volume</div>

<!-- T21 -->
<div class="c" style="left:535px;top:632px;width:42px;height:38px;background:linear-gradient(#4e3f70 0 15px,#3d4850 15px)"><div class="wv" style="top:20px;height:12px;background:repeating-linear-gradient(90deg,#b8a6d6 0 1px,#6d5e8a 1px 2px)"></div></div>
<div class="c t" style="left:584px;top:632px;width:118px;height:38px"><span class="i">⚯</span>Param. EQ..nd 7 freq<div class="wv" style="top:15px;height:1px;background:#cfe7e4"></div></div>
<div class="c" style="left:1149px;top:632px;width:42px;height:38px;background:linear-gradient(#4e3f70 0 15px,#3d4850 15px)"><div class="wv" style="top:20px;height:12px;background:repeating-linear-gradient(90deg,#b8a6d6 0 1px,#6d5e8a 1px 2px)"></div></div>
<div class="c t" style="left:1198px;top:632px;width:118px;height:38px"><span class="i">⚯</span>Param. EQ..nd 7 freq<div class="wv" style="top:15px;height:1px;background:#cfe7e4"></div></div>

<!-- T22 -->
<div class="c m" style="left:535px;top:672px;width:42px;height:16px"><span class="i">⚯</span>Se..h</div>
<div class="c m" style="left:1149px;top:672px;width:42px;height:16px"><span class="i">⚯</span>Se..h</div>
<div class="c ol" style="left:706px;top:672px;width:94px;height:16px"></div>
<div class="c ol" style="left:813px;top:672px;width:98px;height:16px"></div>
<div class="c ol" style="left:1320px;top:672px;width:93px;height:16px"></div>
<div class="c ol" style="left:1427px;top:672px;width:98px;height:16px"></div>

<!-- T23 -->
<div class="c m" style="left:535px;top:689px;width:42px;height:16px"><span class="i">⚯</span>Par..</div>
<div class="c m" style="left:1149px;top:689px;width:42px;height:16px"><span class="i">⚯</span>Par..</div>

<!-- T24 -->
<div class="c m" style="left:479px;top:706px;width:98px;height:16px"><span class="i">⇥</span>Ultrason..BPM G#</div>
<div class="c m" style="left:1093px;top:706px;width:98px;height:16px"><span class="i">⇥</span>Ultrason..BPM G#</div>

<!-- T25 -->
<div class="c m" style="left:583px;top:724px;width:6px;height:16px"></div>
<div class="c m" style="left:694px;top:724px;width:7px;height:16px"></div>
<div class="c m" style="left:805px;top:724px;width:7px;height:16px"></div>
<div class="c m" style="left:1197px;top:724px;width:6px;height:16px"></div>
<div class="c m" style="left:1308px;top:724px;width:7px;height:16px"></div>
<div class="c m" style="left:1420px;top:724px;width:7px;height:16px"></div>

<!-- T26 -->
<div class="c m" style="left:521px;top:741px;width:56px;height:16px"><span class="i">⇥</span>Cyma..M</div>
<div class="c m" style="left:1135px;top:741px;width:56px;height:16px"><span class="i">⇥</span>Cyma..M</div>

</div></body></html>
